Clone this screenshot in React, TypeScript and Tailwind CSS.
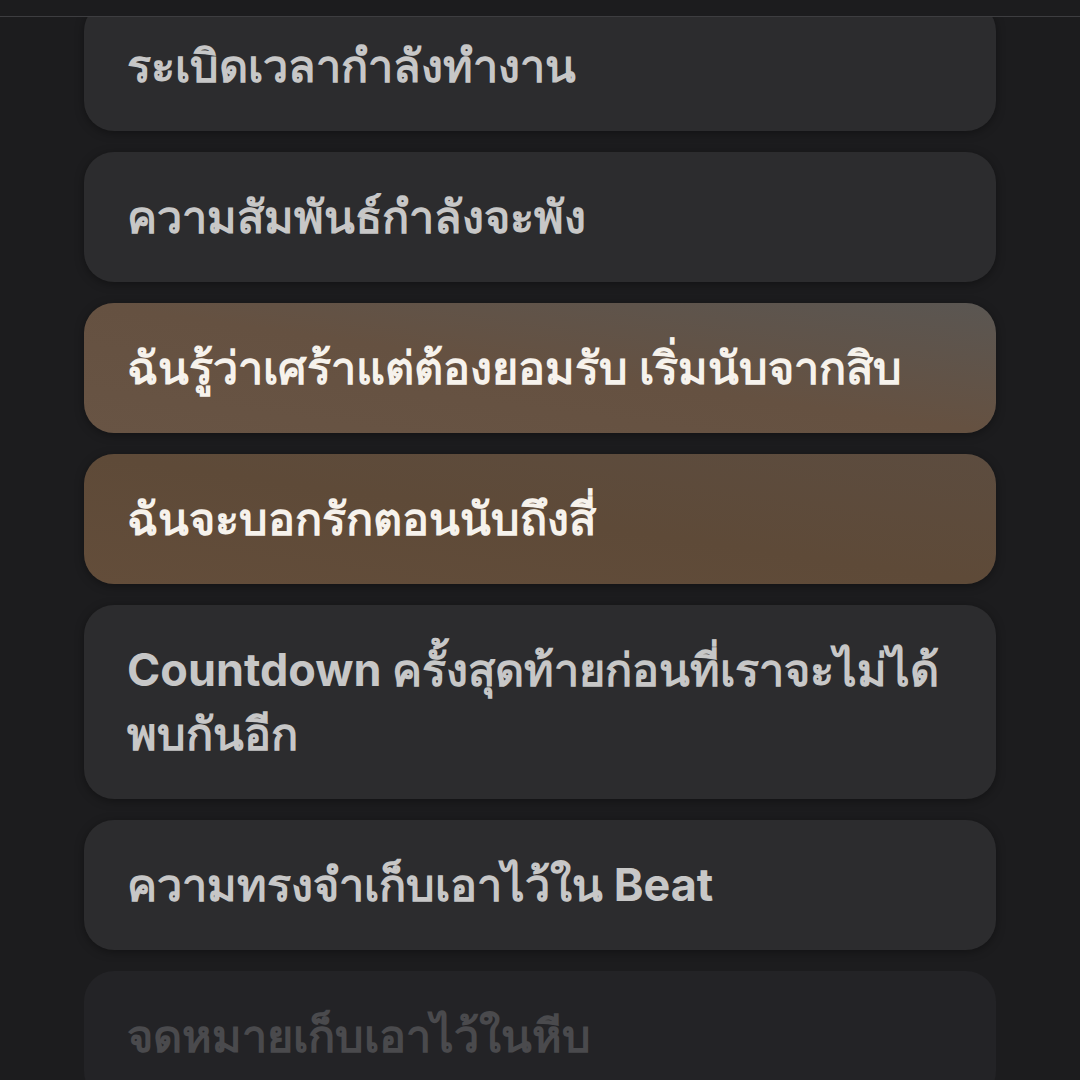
import React from 'react';

type State = 'normal' | 'active' | 'activeLow' | 'faded';
type Line = { text: string; state: State };

const lines: Line[] = [
  { text: 'ระเบิดเวลากำลังทำงาน', state: 'normal' },
  { text: 'ความสัมพันธ์กำลังจะพัง', state: 'normal' },
  { text: 'ฉันรู้ว่าเศร้าแต่ต้องยอมรับ เริ่มนับจากสิบ', state: 'active' },
  { text: 'ฉันจะบอกรักตอนนับถึงสี่', state: 'activeLow' },
  { text: 'Countdown ครั้งสุดท้ายก่อนที่เราจะไม่ได้พบกันอีก', state: 'normal' },
  { text: 'ความทรงจำเก็บเอาไว้ใน Beat', state: 'normal' },
  { text: 'จดหมายเก็บเอาไว้ในหีบ', state: 'faded' },
];

const cardClass: Record<State, string> = {
  normal: 'bg-[#2c2c2e] text-[#c7c7c7] shadow-[0_2px_10px_rgba(0,0,0,0.35)]',
  active:
    'bg-gradient-to-bl from-[#5a5652] via-[#655141] to-[#685444] text-[#f6f2ec] shadow-[0_2px_10px_rgba(0,0,0,0.35)]',
  activeLow:
    'bg-gradient-to-bl from-[#5c4c3f] via-[#5e4a38] to-[#634d3a] text-[#f6f2ec] shadow-[0_2px_10px_rgba(0,0,0,0.35)]',
  faded: 'bg-[#232326] text-[#4a4a4d]',
};

const App = () => {
  return (
    <div className="relative h-[1080px] w-[1080px] overflow-hidden bg-[#1c1c1e] font-['Inter','Noto_Sans',sans-serif]">
      {/* Top bar */}
      <div className="absolute left-0 right-0 top-0 z-10 h-[17px] border-b border-[#3d3d40] bg-[#1c1c1e]" />

      {/* Lyrics */}
      <div className="flex flex-col gap-[21px] px-[84px] pt-px">
        {lines.map((line, i) => (
          <div
            key={i}
            className={`rounded-[30px] pl-[43px] pr-[36px] py-[33px] text-[45px] font-bold leading-[64px] ${cardClass[line.state]}`}
          >
            {line.text}
          </div>
        ))}
      </div>
    </div>
  );
};

export default App;
